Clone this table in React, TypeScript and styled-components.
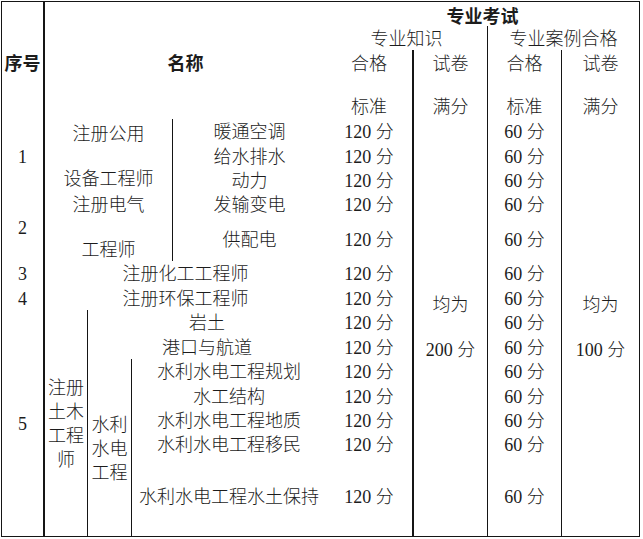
import React from 'react';
import styled, { createGlobalStyle } from 'styled-components';

const INK = '#151515';

const GlobalStyle = createGlobalStyle`
  html, body {
    margin: 0;
    padding: 0;
    background: #fff;
  }
`;

// column widths / row heights measured off the scan
const Sheet = styled.div`
  display: grid;
  grid-template-columns: 43px 43px 44px 41px 153px 88px 74px 74px 77px;
  grid-template-rows:
    24px 24px 69px
    24px 25px 24px 24px 45px 24px 25px 24px 25px 24px 25px 24px 24px 80px;
  width: 639px;
  box-sizing: border-box;
  margin: 1px 0 0 1px;
  border: 1px solid ${INK};
  color: #1c1c1c;
  font-family: "Liberation Serif", "Noto Sans CJK SC", serif;
  font-size: 18px;
  font-weight: 300;
  background: #fff;
`;

type CellProps = {
  $col: string;
  $row: string;
  $rule?: 1 | 2;
  $lh?: number;
  $bold?: boolean;
  $top?: number;
};

const Cell = styled.div<CellProps>`
  grid-column: ${p => p.$col};
  grid-row: ${p => p.$row};
  display: flex;
  flex-direction: column;
  align-items: center;
  justify-content: ${p => (p.$top ? 'flex-start' : 'center')};
  padding-top: ${p => p.$top ?? 2}px;
  min-height: 0;
  text-align: center;
  white-space: nowrap;
  line-height: ${p => p.$lh ?? 24}px;
  border-right: ${p => (p.$rule ? `${p.$rule}px solid ${INK}` : 'none')};
  font-weight: ${p => (p.$bold ? 700 : 300)};
  font-family: ${p => (p.$bold ? '"Noto Sans CJK SC", sans-serif' : 'inherit')};
`;

const Line = styled.span`
  display: block;
`;

const Lines = ({ text }: { text: string[] }) => (
  <>
    {text.map((t, i) => (
      <Line key={i}>{t}</Line>
    ))}
  </>
);

// body rows start at grid line 4
const scoreRows = [4, 5, 6, 7, 8, 9, 10, 11, 12, 13, 14, 15, 16, 17];

const specialties: { name: string; col: string; row: number }[] = [
  { name: '暖通空调', col: '5', row: 4 },
  { name: '给水排水', col: '5', row: 5 },
  { name: '动力', col: '5', row: 6 },
  { name: '发输变电', col: '5', row: 7 },
  { name: '供配电', col: '5', row: 8 },
  { name: '注册化工工程师', col: '2 / 6', row: 9 },
  { name: '注册环保工程师', col: '2 / 6', row: 10 },
  { name: '岩土', col: '3 / 6', row: 11 },
  { name: '港口与航道', col: '3 / 6', row: 12 },
  { name: '水利水电工程规划', col: '4 / 6', row: 13 },
  { name: '水工结构', col: '4 / 6', row: 14 },
  { name: '水利水电工程地质', col: '4 / 6', row: 15 },
  { name: '水利水电工程移民', col: '4 / 6', row: 16 },
  { name: '水利水电工程水土保持', col: '4 / 6', row: 17 },
];

export default function App() {
  return (
    <>
      <GlobalStyle />
      <Sheet>
        {/* header */}
        <Cell $col="1" $row="1 / 4" $rule={2} $bold>序号</Cell>
        <Cell $col="2 / 6" $row="1 / 4" $bold>名称</Cell>
        <Cell $col="6 / 10" $row="1" $bold>专业考试</Cell>
        <Cell $col="6 / 8" $row="2" $rule={1}>专业知识</Cell>
        <Cell $col="8 / 10" $row="2">专业案例合格</Cell>
        <Cell $col="6" $row="3" $rule={2} $lh={43}><Lines text={['合格', '标准']} /></Cell>
        <Cell $col="7" $row="3" $rule={1} $lh={43}><Lines text={['试卷', '满分']} /></Cell>
        <Cell $col="8" $row="3" $rule={1} $lh={43}><Lines text={['合格', '标准']} /></Cell>
        <Cell $col="9" $row="3" $lh={43}><Lines text={['试卷', '满分']} /></Cell>

        {/* 序号 */}
        <Cell $col="1" $row="4 / 7" $rule={2}>1</Cell>
        <Cell $col="1" $row="7 / 9" $rule={2}>2</Cell>
        <Cell $col="1" $row="9" $rule={2}>3</Cell>
        <Cell $col="1" $row="10" $rule={2}>4</Cell>
        <Cell $col="1" $row="11 / 18" $rule={2}>5</Cell>

        {/* 名称 groups */}
        <Cell $col="2 / 5" $row="4 / 7" $rule={1} $lh={45}>
          <Lines text={['注册公用', '设备工程师']} />
        </Cell>
        <Cell $col="2 / 5" $row="7 / 9" $rule={1} $lh={45}>
          <Lines text={['注册电气', '工程师']} />
        </Cell>
        <Cell $col="2" $row="11 / 18" $rule={1}>
          <Lines text={['注册', '土木', '工程', '师']} />
        </Cell>
        <Cell $col="3" $row="13 / 18" $rule={1}>
          <Lines text={['水利', '水电', '工程']} />
        </Cell>

        {specialties.map(s => (
          <Cell key={s.name} $col={s.col} $row={String(s.row)}>{s.name}</Cell>
        ))}

        {/* scores */}
        {scoreRows.map(r => (
          <Cell key={'a' + r} $col="6" $row={String(r)} $rule={2}>120 分</Cell>
        ))}
        <Cell $col="7" $row="4 / 18" $rule={1} $lh={45} $top={164}>
          <Lines text={['均为', '200 分']} />
        </Cell>
        {scoreRows.map(r => (
          <Cell key={'b' + r} $col="8" $row={String(r)} $rule={1}>60 分</Cell>
        ))}
        <Cell $col="9" $row="4 / 18" $lh={45} $top={164}>
          <Lines text={['均为', '100 分']} />
        </Cell>
      </Sheet>
    </>
  );
}
